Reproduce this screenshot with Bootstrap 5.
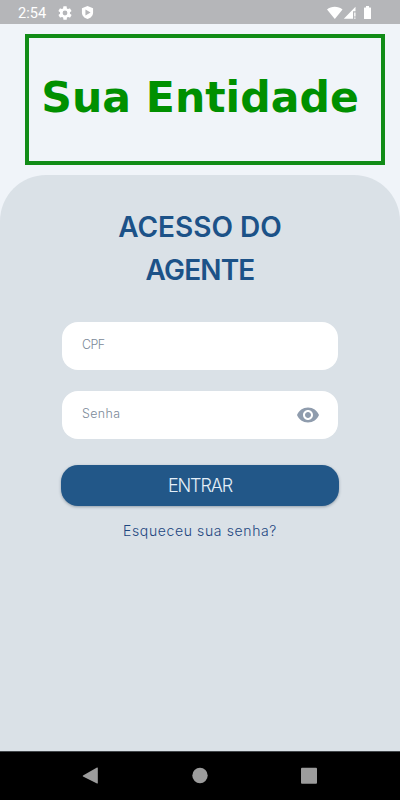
<!DOCTYPE html>
<html lang="pt-BR">
<head>
<meta charset="utf-8">
<meta name="viewport" content="width=device-width, initial-scale=1">
<title>Acesso do Agente</title>
<link href="https://cdn.jsdelivr.net/npm/bootstrap@5.3.0/dist/css/bootstrap.min.css" rel="stylesheet">
<style>
body{height:800px;background:#f0f4f9;font-family:Inter,"Open Sans",sans-serif;overflow:hidden}
svg{display:block;flex:none}
.statusbar{height:24px;background:#b5b6b9;padding:1px 27px 0 18px;color:#fff}
.clock{font:400 14.6px/24px Roboto,sans-serif;width:39px}
.brand-area{height:151px;padding:9.500px 15px 0 25px}
.brand-box{height:131px;border:4px solid #118c17;color:#009000;font:700 42.6px/118px "DejaVu Sans",sans-serif;white-space:nowrap;padding-right:10px}
.panel{height:576px;background:#dae1e7;border-radius:46px 46px 0 0;padding:31px 61px 0}
.title{font:600 28px/43px Inter,sans-serif;color:#1c5288;margin-bottom:30px}
.title-top{letter-spacing:0}
.title-bottom{letter-spacing:-.85px}
.field{height:48px;margin:0 1px;background:#fff;border-radius:16px}
.field input{font:300 12.4px/18px Inter,sans-serif;padding:0 0 3px 20px;color:#53657b;border-radius:16px}
.field input:focus{box-shadow:none}
.field input::placeholder{color:#7b8998;opacity:1}
.field-cpf input{letter-spacing:-.5px}
.field-senha{margin-top:21px}
.field-senha input{letter-spacing:.4px}
.eye{padding:0 18px 0 0}
.enter{height:41px;margin-top:26px;background:#225788!important;color:#e4eff8!important;border-radius:17px;font:300 18px/42px Inter,sans-serif;letter-spacing:-1.1px;padding:0;border:0;box-shadow:0 1px 3px rgba(40,60,80,.4)}
.forgot{font:300 14px/22px Inter,sans-serif;letter-spacing:.62px;color:#1c467f;margin-top:14px}
.navkeys{height:49px;background:#000;border-top:1px solid #42464a}
</style>
<script defer src="https://cdn.jsdelivr.net/npm/bootstrap@5.3.0/dist/js/bootstrap.bundle.min.js"></script>
</head>
<body class="m-0">
<header class="statusbar d-flex align-items-center">
<span class="clock">2:54</span>
<svg width="16" height="16" viewBox="0 0 24 24" fill="#fff"><path fill-rule="evenodd" d="M19.4 13a7.500 7.500 0 0 0 0-2l2.100-1.600a.5.5 0 0 0 .1-.6l-2-3.500a.5.5 0 0 0-.6-.2l-2.500 1a7 7 0 0 0-1.700-1L14.500 2.400a.5.5 0 0 0-.5-.4h-4a.5.5 0 0 0-.5.4l-.4 2.700a7 7 0 0 0-1.700 1l-2.500-1a.5.5 0 0 0-.6.2l-2 3.500a.5.5 0 0 0 .1.600L4.600 11a7.500 7.500 0 0 0 0 2l-2.100 1.600a.5.5 0 0 0-.1.600l2 3.500c.1.200.4.300.6.200l2.500-1a7 7 0 0 0 1.700 1l.4 2.700c0 .2.200.4.500.4h4c.200 0 .4-.2.5-.4l.3-2.700a7 7 0 0 0 1.700-1l2.500 1c.2.100.5 0 .6-.2l2-3.500a.5.5 0 0 0-.1-.6zM12 15.600a3.600 3.600 0 1 1 0-7.200 3.600 3.600 0 0 1 0 7.200z"/></svg>
<svg class="ms-2" width="13" height="15" viewBox="0 0 14 15"><path fill="#fff" d="M7 .5 13 3v4.500c0 3.500-2.500 6-6 7-3.500-1-6-3.500-6-7V3z"/><path fill="#b5b6b9" d="m4.800 4.400 5.500 3.200-5.500 3.200z"/></svg>
<svg class="ms-auto" width="46" height="16" viewBox="0 0 46 16" fill="#fff"><path d="M0 4.500C4 .7 11.500.7 15.500 4.500L7.800 14z"/><path d="M16.800 13.700 28.500 1.800v4.400H26v7.500z"/><path d="M27.200 7.500h1.300v4h-1.300zm0 4.900h1.300v1.400h-1.300z"/><path d="M39 1h3v1.500h1.500q.5 0 .5.500v10.500q0 .5-.5.500h-6q-.5 0-.5-.5V3q0-.5.5-.5H39z"/></svg>
</header>
<div class="brand-area"><div class="brand-box text-center">Sua Entidade</div></div>
<main class="panel">
<h1 class="title text-center"><span class="title-top">ACESSO DO</span><br><span class="title-bottom">AGENTE</span></h1>
<form>
<div class="field field-cpf d-flex align-items-center"><input class="form-control border-0 bg-transparent h-100" type="text" placeholder="CPF" aria-label="CPF"></div>
<div class="field field-senha d-flex align-items-center"><input class="form-control border-0 bg-transparent h-100" type="password" placeholder="Senha" aria-label="Senha">
<span class="eye"><svg width="24" height="24" viewBox="0 0 24 24" fill="#8f9cad"><path d="M12 4.500C7 4.500 2.730 7.610 1 12c1.730 4.390 6 7.500 11 7.500s9.270-3.110 11-7.500c-1.730-4.390-6-7.500-11-7.500zM12 17c-2.760 0-5-2.240-5-5s2.240-5 5-5 5 2.240 5 5-2.240 5-5 5zm0-8c-1.660 0-3 1.340-3 3s1.340 3 3 3 3-1.340 3-3-1.340-3-3-3z"/></svg></span></div>
<button class="enter btn w-100 d-block" type="button">ENTRAR</button>
</form>
<a class="forgot d-block text-center text-decoration-none" href="#">Esqueceu sua senha?</a>
</main>
<footer class="navkeys d-flex justify-content-center align-items-center">
<svg width="400" height="48" viewBox="0 0 400 48" fill="#9c9c9c"><path d="M83 23.500 97 15.500q.8-.3.8.500v15q0 .8-.8.500L83 24.500q-.6-.5 0-1z"/><circle cx="200" cy="23.500" r="7.700"/><rect x="301" y="15.700" width="16" height="16" rx="1"/></svg>
</footer>
</body>
</html>
